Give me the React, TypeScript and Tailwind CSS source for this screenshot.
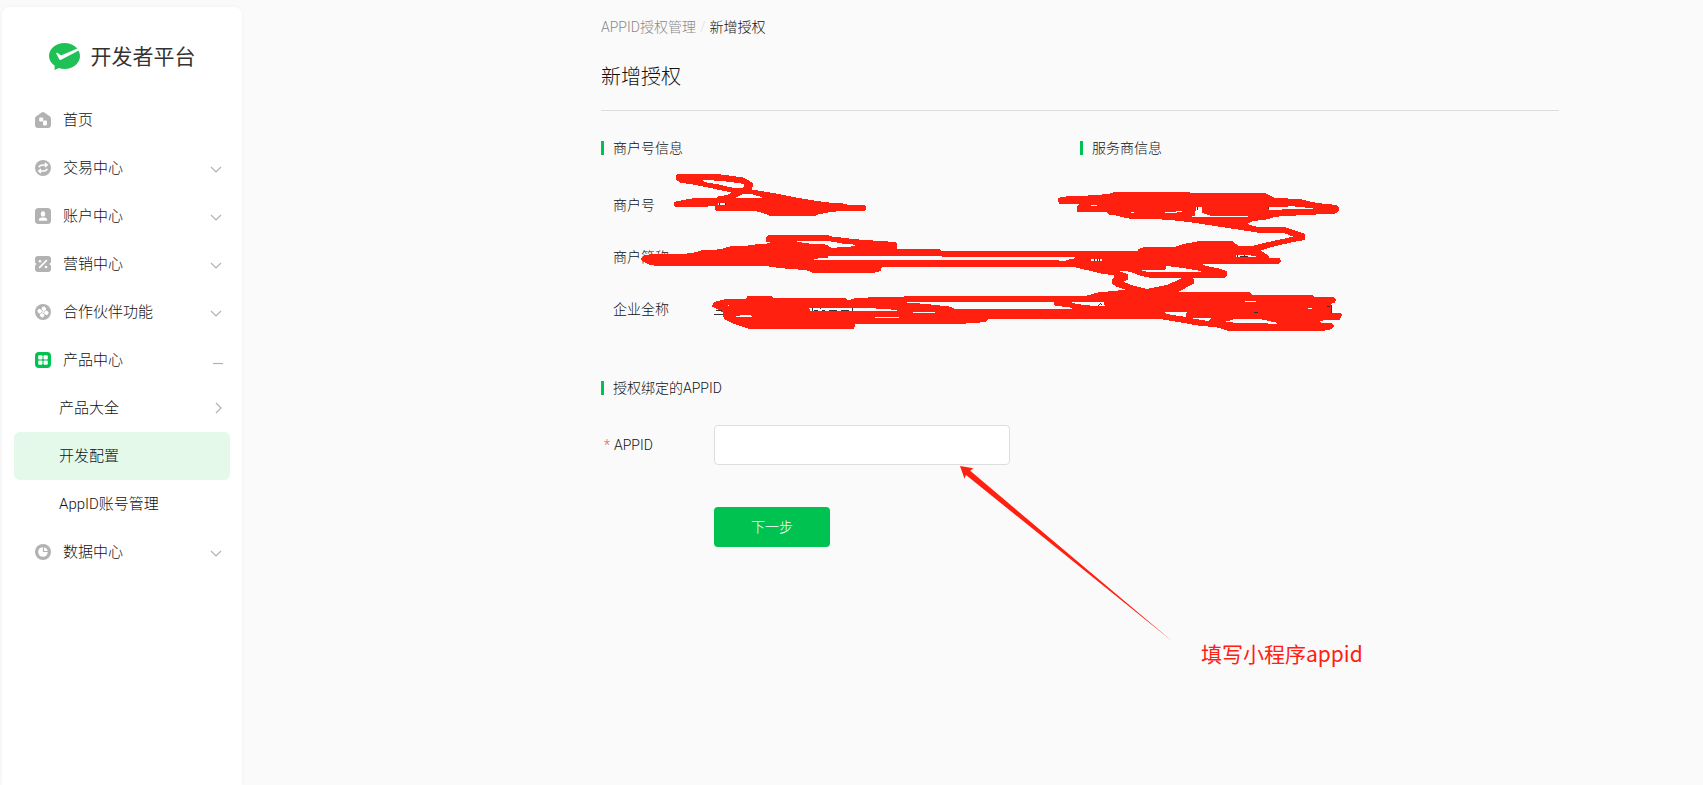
import type { ReactNode } from 'react';

type NavItem = {
  label: string;
  icon: ReactNode;
  mark?: 'down' | 'minus';
  children?: { label: string; active?: boolean; arrow?: boolean }[];
};

const navItems: NavItem[] = [
  {
    label: '首页',
    icon: (
      <>
        <path d="M6.3.7a2.8 2.8 0 0 1 3.4 0l5 3.6A3 3 0 0 1 16 6.700V13a3 3 0 0 1-3 3H3a3 3 0 0 1-3-3V6.700a3 3 0 0 1 1.300-2.400z" fill="#b2b2b2" />
        <rect x="4.200" y="5.500" width="4" height="4" rx="1" fill="#fff" />
        <rect x="8" y="8.500" width="4" height="5" rx="1" fill="#fff" />
      </>
    ),
  },
  {
    label: '交易中心',
    mark: 'down',
    icon: (
      <>
        <circle cx="8" cy="8" r="8" fill="#b2b2b2" />
        <path d="M3.800 7.300C4.500 5.200 6 4.900 8 4.900h3.600M10 3l2.200 2L10 7M12.200 8.700c-.7 2.100-2.200 2.400-4.200 2.400H4.400M6 9l-2.200 2L6 13" fill="none" stroke="#fff" strokeWidth="1.500" />
      </>
    ),
  },
  {
    label: '账户中心',
    mark: 'down',
    icon: (
      <>
        <rect width="16" height="16" rx="3.500" fill="#b2b2b2" />
        <ellipse cx="8" cy="5.900" rx="2.200" ry="2.700" fill="#fff" />
        <path d="M3.800 11.700c0-1.500 2-2.100 4.200-2.100s4.200.6 4.200 2.100c0 .8-.5 1-1.200 1H5c-.7 0-1.200-.2-1.200-1z" fill="#fff" />
      </>
    ),
  },
  {
    label: '营销中心',
    mark: 'down',
    icon: (
      <>
        <path d="M3 0h10a3 3 0 0 1 3 3v3.700a1.300 1.300 0 0 0 0 2.600V13a3 3 0 0 1-3 3H3a3 3 0 0 1-3-3V9.300a1.300 1.300 0 0 0 0-2.600V3a3 3 0 0 1 3-3z" fill="#b2b2b2" />
        <path d="M11.800 4.200l-7.600 7.600" stroke="#fff" strokeWidth="1.700" />
        <circle cx="5" cy="5.300" r="1.300" fill="#fff" />
        <circle cx="11" cy="11" r="1.300" fill="#fff" />
      </>
    ),
  },
  {
    label: '合作伙伴功能',
    mark: 'down',
    icon: (
      <>
        <circle cx="8" cy="8" r="8" fill="#b2b2b2" />
        <g fill="#fff">
          <rect x="6.700" y="2.700" width="4.300" height="4" rx="1.600" transform="rotate(35 8.800 4.700)" />
          <rect x="9.200" y="6.800" width="4.300" height="4" rx="1.600" transform="rotate(35 11.300 8.800)" />
          <rect x="5" y="9.300" width="4.300" height="4" rx="1.600" transform="rotate(35 7.200 11.300)" />
          <rect x="2.500" y="5.200" width="4.300" height="4" rx="1.600" transform="rotate(35 4.700 7.200)" />
        </g>
        <circle cx="8" cy="8" r="1" fill="#fff" />
      </>
    ),
  },
  {
    label: '产品中心',
    mark: 'minus',
    icon: (
      <>
        <rect width="16" height="16" rx="4" fill="#00c250" />
        <g fill="#fff">
          <rect x="3.200" y="3.200" width="4.300" height="4.300" rx="1" />
          <rect x="8.500" y="3.200" width="4.300" height="4.300" rx="1" />
          <rect x="3.200" y="8.500" width="4.300" height="4.300" rx="1" />
          <rect x="8.500" y="8.500" width="4.300" height="4.300" rx="1" />
        </g>
      </>
    ),
    children: [
      { label: '产品大全', arrow: true },
      { label: '开发配置', active: true },
      { label: 'AppID账号管理' },
    ],
  },
  {
    label: '数据中心',
    mark: 'down',
    icon: (
      <>
        <circle cx="8" cy="8" r="8" fill="#b2b2b2" />
        <circle cx="8" cy="8" r="4.800" fill="#fff" />
        <path d="M8.500 2.500V7.500H14" fill="none" stroke="#b2b2b2" strokeWidth="1.200" />
      </>
    ),
  },
];

const marks = {
  down: <path d="M1 5l5 5 5-5" />,
  minus: <path d="M3 9.500h10" />,
  right: <path d="M6 1l5 5-5 5" />,
};

const merchantFields = ['商户号', '商户简称', '企业全称'];

function Mark({ type }: { type: keyof typeof marks }) {
  return (
    <svg className="ml-auto h-3 w-3 overflow-visible" viewBox="0 0 12 12" fill="none" stroke="#b2b2b2" strokeWidth="1.200">
      {marks[type]}
    </svg>
  );
}

function Sidebar() {
  return (
    <aside className="mt-[7px] ml-0.5 w-60 shrink-0 rounded-t-lg bg-white px-3 shadow-[0_0_4px_rgba(0,0,0,0.04)]">
      <div className="flex h-[89px] items-center justify-center gap-[11px] pt-2.5">
        <svg className="h-[27px] w-[31px]" viewBox="0 0 31 27">
          <path d="M15.500 0C24.100 0 31 5.800 31 13s-6.900 13-15.500 13c-2 0-3.900-.3-5.600-.9L5.500 27l.2-4.300C2.200 20.300 0 16.900 0 13 0 5.800 6.900 0 15.500 0z" fill="#1fc056" />
          <path d="M7 10.300c.5-.8 1.200-.8 1.800-.4l2.700 2.100c.5.400 1 .4 1.600.1L29 5.300l1.300 2-17.700 9.200c-1.200.7-2 .5-2.500-.5z" fill="#fff" />
        </svg>
        <span className="text-[21px] leading-7 font-normal text-[#333]">开发者平台</span>
      </div>
      <nav>
        {navItems.map((item) => (
          <div key={item.label}>
            <button type="button" className="flex h-12 w-full items-center pr-2 pl-[21px] text-[15px]">
              <svg className="mr-3 h-4 w-4" viewBox="0 0 16 16">{item.icon}</svg>
              <span className="pt-0.5">{item.label}</span>
              {item.mark && <Mark type={item.mark} />}
            </button>
            {item.children?.map((child) => (
              <a
                key={child.label}
                href="#"
                className={`flex h-12 items-center rounded-md pr-2 pl-[45px] text-[15px] ${child.active ? 'bg-[#e4f9e9]' : ''}`}
              >
                <span className="pt-0.5">{child.label}</span>
                {child.arrow && <Mark type="right" />}
              </a>
            ))}
          </div>
        ))}
      </nav>
    </aside>
  );
}

function SectionTitle({ children }: { children: ReactNode }) {
  return (
    <h2 className="flex items-center gap-[9px] leading-[26px]">
      <span className="h-3.5 w-[3px] bg-[#00c250]" />
      {children}
    </h2>
  );
}

// Freehand red marker that hides the merchant values
function Redaction() {
  return (
    <svg className="pointer-events-none absolute top-0 left-0 h-[180px] w-[759px]" viewBox="33 3 2277 540" shapeRendering="crispEdges">
      <g fill="#ff2010">
        <path d="M258 46L265 42 380 42 428 48 458 52 478 62 489 70 488 80 484 88 520 94 565 102 605 110 650 118 690 124 730 129 768 131 772 134 822 135 828 140 828 150 823 153 755 153 722 156 684 163 676 168 540 168 522 160 495 153 380 153 375 149 375 137 340 141 256 141 252 136 252 127 258 124 308 115 378 114 384 109 412 105 424 98 414 95 375 87 342 80 300 72 270 68 258 58z" />
        <path d="M1404 115L1410 112 1438 108 1515 106 1565 100 1570 96 1800 96 1802 99 2025 99 2055 114 2130 117 2180 129 2240 135 2247 142 2245 156 2235 161 2145 165 2060 170 2025 179 1990 183 1970 192 2005 201 2085 201 2110 210 2145 222 2145 240 2110 246 2040 262 2012 272 2037 288 2037 295 2070 295 2073 305 2068 311 1870 311 1832 314 1888 326 1910 333 1910 348 1905 353 1810 353 1812 370 1785 385 1765 396 1980 396 1988 405 2170 405 2172 411 2232 411 2238 418 2235 427 2224 432 2224 458 2250 459 2256 465 2250 479 2205 480 2182 487 2226 489 2232 498 2225 507 2200 513 1915 513 1885 503 1820 496 1770 487 1705 476 1194 477 1185 487 1130 489 1128 492 796 492 792 507 480 507 432 492 405 478 399 470 400 458 380 447 366 440 366 436 375 425 405 418 468 416 472 408 545 408 550 413 765 413 775 421 800 413 940 411 942 408 1487 408 1520 398 1570 393 1605 389 1580 380 1567 372 1567 358 1575 347 1530 340 1490 330 1450 321 876 321 872 333 850 339 670 339 648 330 600 327 570 324 525 318 200 318 175 313 155 302 153 296 160 287 180 283 280 282 310 278 340 270 395 268 412 260 470 257 500 253 550 249 528 246 528 232 535 225 715 225 722 229 790 237 825 240 915 246 921 252 921 267 1048 267 1056 273 1645 273 1645 267 1660 262 1750 262 1780 252 1830 243 1928 243 1945 258 1985 258 2030 247 2110 230 2080 218 2005 218 1920 205 1810 188 1735 179 1618 176 1580 167 1555 163 1548 156 1462 156 1461 138 1467 132 1408 131 1404 125z" />
      </g>
      <g fill="#fafafa">
        <path d="M336 60L384 62 420 66 462 72 464 78 454 85 420 82 380 72 342 66z" />
        <path d="M460 101L486 103 516 111 516 114 436 113 452 106z" />
        <path d="M385 129H407V135H382z" />
        <path d="M612 243L716 243 760 251 794 254 794 259 748 261 732 265 716 260 712 254 650 250z" />
        <path d="M668 297L714 293 716 288 1056 288 1056 291 1458 291 1452 296 1430 300 1425 303 1410 303 1405 300 678 300z" />
        <path d="M1580 332L1620 335 1650 347 1680 353 1780 353 1730 375 1670 387 1630 377 1600 365 1614 358 1614 342z" />
        <path d="M1650 330L1725 330 1730 318 1780 324 1833 333 1833 336 1675 336z" />
        <path d="M1938 284L1975 285 2010 292 1938 292z" />
        <path d="M1500 300L1505 297 1535 297 1535 303 1508 303z" />
        <path d="M945 427L1390 426 1395 437 1445 443 1445 447 1095 447 1080 440 1020 433z" />
        <path d="M970 456H1035V459H970zM855 471H927V474H855zM414 435H417V438H414z" />
        <path d="M658 444L820 444 895 447 930 453 660 453z" />
        <path d="M1445 427L1540 426 1545 437 1505 437 1460 432z" />
        <path d="M435 470L460 464 486 467 486 470z" />
        <path d="M1725 456L1790 456 1788 471 1730 462z" />
        <path d="M1800 474L1863 474 1855 483z" />
        <path d="M1900 487L1935 477 2010 477 2065 489 2060 492 2010 489z" />
        <path d="M1965 423H1998V426H1965zM2155 443H2166V447H2153z" />
        <path d="M2035 142L2090 141 2100 138 2170 145 2168 148 2090 148 2038 150z" />
        <path d="M1807 168H1975L1972 171H1807z" />
        <path d="M1818 142H1837V158L1860 167H1815z" />
        <path d="M1720 158L1775 153 1775 157 1725 159z" />
        <path d="M1503 135H1521V138H1503zM1623 155H1632V158H1623z" />
      </g>
      {/* Slivers of text left showing between the strokes */}
      <g fill="#333">
        <path d="M378 450H396V453H378zM372 462H400V465H372z" />
        <path d="M386 130H389V136H386zM404 130H407V134H404z" />
        <path d="M665 444H668V453H665zM672 450H684V453H672zM690 444H693V447H690zM696 450H705V453H696zM716 450H740V453H716zM754 450H778V453H754zM786 444H789V453H786z" />
        <path d="M1513 298H1516V303H1513zM1521 298H1524V303H1521zM1528 298H1531V303H1528z" />
        <path d="M1530 429H1533V432H1530zM1527 432H1530V435H1527zM1533 432H1536V435H1533zM1524 435H1527V438H1524z" />
        <path d="M1821 142H1824V150H1821zM2034 141H2037V147H2034z" />
        <path d="M1940 285H1943V292H1940zM1950 288H1974V291H1950zM1962 285H1965V288H1962z" />
        <path d="M1992 456H2004V459H1992zM2212 438H2220V441H2212zM2223 435H2226V459H2223z" />
      </g>
    </svg>
  );
}

export default function App() {
  return (
    <div className="flex min-h-screen bg-[#fafafa] font-['Roboto','Noto_Sans_CJK_SC',sans-serif] text-sm font-light text-[#111]">
      <Sidebar />
      <main className="relative mr-36 ml-[359px] min-w-0 flex-1 pt-4">
        <nav className="flex gap-1 leading-[22px]">
          <a href="#" className="text-[#888]">APPID授权管理</a>
          <span className="text-[#ddd]">/</span>
          <span>新增授权</span>
        </nav>
        <h1 className="mt-[25px] border-b border-[#ddd] pb-[19px] text-xl leading-7 font-light">新增授权</h1>

        <div className="mt-6 grid grid-cols-2">
          <SectionTitle>商户号信息</SectionTitle>
          <SectionTitle>服务商信息</SectionTitle>
        </div>
        <div className="relative pt-[18px]">
          {merchantFields.map((field) => (
            <p key={field} className="flex h-[52px] items-center pl-3">{field}</p>
          ))}
          <Redaction />
        </div>

        <form className="relative mt-10">
          <SectionTitle>授权绑定的APPID</SectionTitle>
          <div className="mt-6 flex items-center">
            <label htmlFor="appid" className="flex w-[113px] pl-[3px]">
              <span className="w-2.5 text-[#e15f63]">*</span>
              APPID
            </label>
            <input id="appid" type="text" className="h-10 w-[296px] rounded border border-[#ddd] bg-white px-3 outline-none" />
          </div>
          <button type="button" className="mt-[42px] ml-[113px] h-10 w-29 rounded bg-[#00c250] text-white">
            下一步
          </button>

          {/* Hint pointing at the input */}
          <svg className="pointer-events-none absolute top-[91px] left-[359px] h-44 w-[213px]" viewBox="0 0 213 176">
            <path d="M0 0L13.300 2.300 10.200 4.800 212.500 175.500 6 9 4.500 12.700z" fill="#ff2010" />
          </svg>
          <p className="absolute top-[264px] left-[600px] font-['Noto_Sans_CJK_SC',sans-serif] text-[21px] leading-7 font-normal whitespace-nowrap text-[#ff2010]">
            填写小程序appid
          </p>
        </form>
      </main>
    </div>
  );
}
